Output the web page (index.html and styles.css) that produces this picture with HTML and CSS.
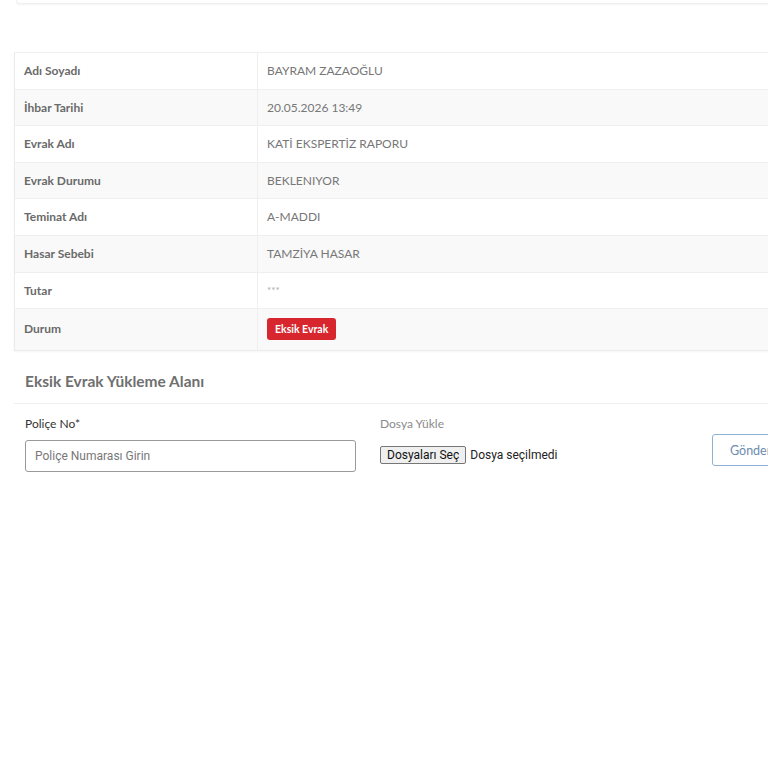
FILE: index.html
```html
<!DOCTYPE html>
<html lang="tr">
<head>
<meta charset="utf-8">
<title>Evrak</title>
<link rel="stylesheet" href="styles.css">
</head>
<body>
<div class="page">
  <div class="top-card"></div>
  <table class="info">
    <tbody>
      <tr><th>Adı Soyadı</th><td>BAYRAM ZAZAOĞLU</td></tr>
      <tr><th>İhbar Tarihi</th><td>20.05.2026 13:49</td></tr>
      <tr><th>Evrak Adı</th><td>KATİ EKSPERTİZ RAPORU</td></tr>
      <tr><th>Evrak Durumu</th><td>BEKLENIYOR</td></tr>
      <tr><th>Teminat Adı</th><td>A-MADDI</td></tr>
      <tr><th>Hasar Sebebi</th><td>TAMZİYA HASAR</td></tr>
      <tr><th>Tutar</th><td class="stars">***</td></tr>
      <tr class="last"><th>Durum</th><td><span class="badge">Eksik Evrak</span></td></tr>
    </tbody>
  </table>

  <section class="upload">
    <h2 class="upload-title">Eksik Evrak Yükleme Alanı</h2>
    <div class="upload-body">
      <div class="field field-police">
        <label class="label-dark">Poliçe No*</label>
        <input class="text-input" type="text" placeholder="Poliçe Numarası Girin">
      </div>
      <div class="field field-file">
        <label class="label-light">Dosya Yükle</label>
        <div class="file-row">
          <button class="file-btn" type="button">Dosyaları Seç</button>
          <span class="file-text">Dosya seçilmedi</span>
        </div>
      </div>
      <div class="field field-send">
        <button class="send-btn" type="button">Gönder</button>
      </div>
    </div>
  </section>
</div>
</body>
</html>
```

FILE: styles.css
```css
html, body {
  margin: 0;
  padding: 0;
  background: #fff;
  overflow: hidden;
}
body {
  font-family: Lato, "Open Sans", Arial, sans-serif;
  color: #666;
  width: 768px;
  height: 768px;
}
.page {
  width: 860px;
  padding-left: 14px;
}
.top-card {
  height: 3px;
  margin-left: 2px;
  border: 1px solid #f0f0f0;
  border-top: none;
  border-radius: 0 0 4px 4px;
  box-shadow: 0 1px 2px rgba(0,0,0,0.05);
  background: #fff;
}
.info {
  margin-top: 48px;
  width: 820px;
  border-collapse: collapse;
  border: 1px solid #ebebeb;
  box-shadow: 0 1px 2px rgba(0,0,0,0.04);
  font-size: 12px;
}
.info th,
.info td {
  padding: 10px 9px 10px 9px;
  line-height: 15.6px;
  text-align: left;
  border-top: 1px solid #efefef;
  vertical-align: middle;
}
.info th {
  width: 224px;
  font-weight: 700;
  color: #6a6a6a;
  border-right: 1px solid #efefef;
}
.info td {
  font-weight: 400;
  color: #777;
  padding-left: 9px;
}
.info tr:nth-child(even) {
  background: #f9f9f9;
}
.info td.stars {
  color: #aaa;
  font-size: 10px;
}
.info tr.last th,
.info tr.last td {
  padding-top: 9px;
  padding-bottom: 10px;
}
.badge {
  display: inline-block;
  background: #d7262d;
  color: #fff;
  font-weight: 700;
  font-size: 10.5px;
  line-height: 22px;
  padding: 0 8px;
  border-radius: 3px;
}
.upload-title {
  margin: 0;
  padding: 20px 11px 12px;
  font-size: 15.5px;
  font-weight: 700;
  color: #6f6f6f;
  line-height: 20px;
  border-bottom: 1px solid #f0f0f0;
}
.upload-body {
  display: flex;
  align-items: flex-start;
  padding: 12px 11px 0;
}
.field {
  display: flex;
  flex-direction: column;
}
.field-police {
  width: 331px;
}
.field-file {
  margin-left: 24px;
  width: 308px;
}
.field-send {
  margin-left: 24px;
  padding-top: 18px;
}
.label-dark {
  font-size: 12px;
  color: #333;
  line-height: 16px;
  margin-bottom: 8px;
}
.label-light {
  font-size: 12px;
  color: #8a8a8a;
  line-height: 16px;
}
.text-input {
  box-sizing: border-box;
  width: 331px;
  height: 32px;
  border: 1px solid #999;
  border-radius: 3px;
  padding: 0 9px;
  font-family: Roboto, Arial, sans-serif;
  font-size: 12px;
  color: #555;
  outline: none;
}
.text-input::placeholder {
  color: #777;
}
.file-row {
  display: flex;
  align-items: center;
  margin-top: 14px;
  font-family: Roboto, Arial, sans-serif;
  font-size: 12px;
}
.file-btn {
  font-family: Roboto, Arial, sans-serif;
  font-size: 12px;
  color: #111;
  background: #efefef;
  border: 1px solid #767676;
  border-radius: 2px;
  height: 18px;
  padding: 0 6px;
  line-height: 16px;
  margin: 0 4px 0 0;
}
.file-text {
  color: #222;
}
.send-btn {
  box-sizing: border-box;
  height: 32px;
  width: 80px;
  border: 1px solid #8fb1d3;
  border-radius: 3px;
  background: #fff;
  color: #6b8cb0;
  font-family: Lato, Arial, sans-serif;
  font-size: 12.5px;
  text-align: left;
  padding-left: 17px;
}
```
